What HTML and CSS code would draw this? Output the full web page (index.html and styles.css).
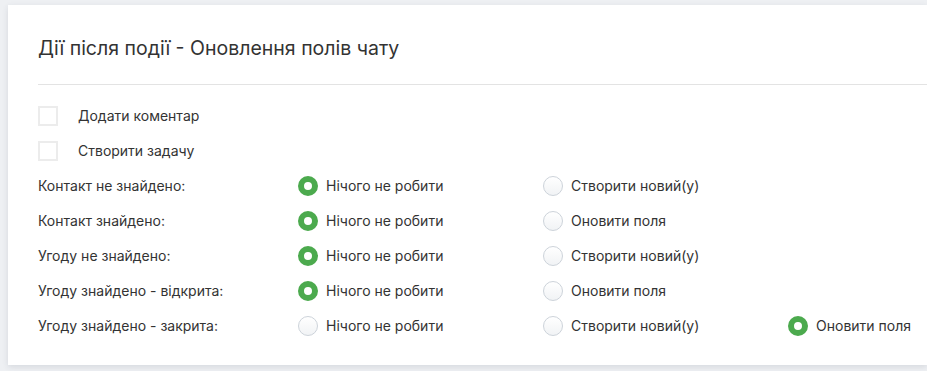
FILE: index.html
```html
<!DOCTYPE html>
<html lang="uk">
<head>
  <meta charset="UTF-8" />
  <title>Дії після події</title>
  <link rel="stylesheet" href="styles.css">
</head>
<body>
  <div class="card">
    <div class="card-head">
      <h2>Дії після події - Оновлення полів чату</h2>
    </div>

    <div class="rows">
      <label class="row check-row">
        <span class="checkbox"></span>
        <span>Додати коментар</span>
      </label>
      <label class="row check-row">
        <span class="checkbox"></span>
        <span>Створити задачу</span>
      </label>

      <div class="row">
        <span class="row-label">Контакт не знайдено:</span>
        <span class="opt"><span class="radio on"></span>Нічого не робити</span>
        <span class="opt"><span class="radio"></span>Створити новий(у)</span>
      </div>
      <div class="row">
        <span class="row-label">Контакт знайдено:</span>
        <span class="opt"><span class="radio on"></span>Нічого не робити</span>
        <span class="opt"><span class="radio"></span>Оновити поля</span>
      </div>
      <div class="row">
        <span class="row-label">Угоду не знайдено:</span>
        <span class="opt"><span class="radio on"></span>Нічого не робити</span>
        <span class="opt"><span class="radio"></span>Створити новий(у)</span>
      </div>
      <div class="row">
        <span class="row-label">Угоду знайдено - відкрита:</span>
        <span class="opt"><span class="radio on"></span>Нічого не робити</span>
        <span class="opt"><span class="radio"></span>Оновити поля</span>
      </div>
      <div class="row">
        <span class="row-label">Угоду знайдено - закрита:</span>
        <span class="opt"><span class="radio"></span>Нічого не робити</span>
        <span class="opt"><span class="radio"></span>Створити новий(у)</span>
        <span class="opt"><span class="radio on"></span>Оновити поля</span>
      </div>
    </div>
  </div>
</body>
</html>
```

FILE: styles.css
```css
* {
  box-sizing: border-box;
  margin: 0;
  padding: 0;
}
body {
  font-family: Inter, "Noto Sans", sans-serif;
  color: #333;
  background: #eef0f3;
  padding: 5px 0 0 8px;
  overflow: hidden;
  height: 100vh;
}
.card {
  height: 360px;
  background: #fff;
  box-shadow: 0 2px 6px rgba(40, 50, 70, 0.12);
  padding-left: 30px;
}
.card-head {
  padding: 29px 0 22px;
  border-bottom: 1px solid #e3e3e3;
}
h2 {
  font-size: 19.5px;
  line-height: 28px;
  font-weight: 400;
  color: #333;
}
.rows {
  padding-top: 13px;
}
.row {
  display: flex;
  align-items: center;
  height: 35px;
  font-size: 14px;
}
.check-row {
  gap: 20px;
}
.checkbox {
  flex-shrink: 0;
  width: 20px;
  height: 20px;
  border: 2px solid #ececec;
}
.row-label {
  flex-shrink: 0;
  width: 260px;
}
.opt {
  flex-shrink: 0;
  width: 245px;
  display: flex;
  align-items: center;
  gap: 8px;
}
.opt:last-child {
  width: auto;
}
.radio {
  flex-shrink: 0;
  width: 20px;
  height: 20px;
  border-radius: 50%;
  border: 1px solid #cdd3da;
  background: linear-gradient(#ffffff, #f1f3f5);
}
.radio.on {
  border: 6px solid #4caa4e;
  background: #fff;
}
```
